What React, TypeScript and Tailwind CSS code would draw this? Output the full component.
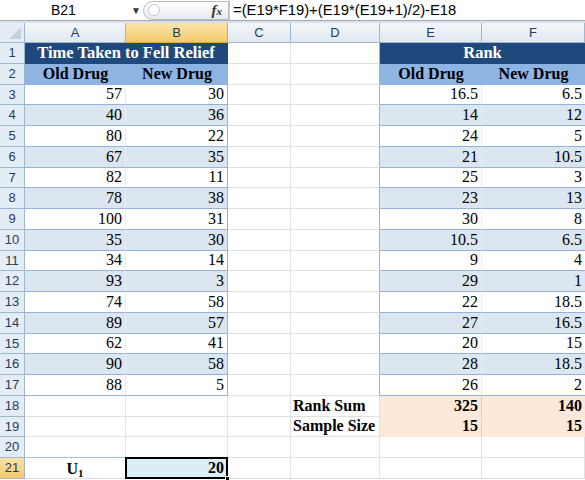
import type { ReactNode } from 'react'

const colA = [57, 40, 80, 67, 82, 78, 100, 35, 34, 93, 74, 89, 62, 90, 88]
const colB = [30, 36, 22, 35, 11, 38, 31, 30, 14, 3, 58, 57, 41, 58, 5]
const colE = ['16.5', '14', '24', '21', '25', '23', '30', '10.5', '9', '29', '22', '27', '20', '28', '26']
const colF = ['6.5', '12', '5', '10.5', '3', '13', '8', '6.5', '4', '1', '18.5', '16.5', '15', '18.5', '2']

const serif = "font-['Liberation_Serif','Times_New_Roman',serif] text-[16px] text-black"

const RowHead = ({ n, active }: { n: number; active?: boolean }) => (
  <div
    className={`flex items-center justify-center border-r border-b border-[#9eb6ce] font-['Liberation_Sans',Arial,sans-serif] text-[13px] text-[#263c57] ${
      active ? 'bg-gradient-to-b from-[#fbe3a7] to-[#f3c86a]' : 'bg-[#e4ecf6]'
    }`}
  >
    {n}
  </div>
)

const Blank = ({ cls = '' }: { cls?: string }) => (
  <div className={`border-r border-b border-[#dfe1e2] bg-white ${cls}`} />
)

const Num = ({ children, cls, bold }: { children: ReactNode; cls: string; bold?: boolean }) => (
  <div className={`flex items-end justify-end pr-[3px] pb-[1px] leading-none ${serif} ${bold ? 'font-bold' : ''} ${cls}`}>
    <span className="pb-[1px]">{children}</span>
  </div>
)

export default function App() {
  return (
    <div className="h-[480px] w-[585px] overflow-hidden bg-white">
      {/* formula bar */}
      <div className="flex h-[21px] items-center border-b border-[#a5acb5] bg-white font-['Liberation_Sans',Arial,sans-serif] text-[14px] text-black">
        <div className="flex w-[143px] items-center">
          <span className="ml-[51px] w-[80px]">B21</span>
          <span className="text-[10px] text-[#333]">▼</span>
        </div>
        <div className="flex h-[19px] w-[86px] items-center rounded-l-full border border-[#b6bcc6] bg-gradient-to-b from-white to-[#e6e9ee]">
          <span className="ml-[4px] h-[12px] w-[12px] rounded-full border border-[#c4c9d1] bg-white" />
          <span className="ml-auto mr-[6px] font-['Liberation_Serif',serif] text-[15px] italic font-bold text-[#333]">
            f<span className="text-[11px]">x</span>
          </span>
        </div>
        <div className="h-full border-l border-[#c9cdd3] pl-[3px] text-[14.8px] leading-[20px]">=(E19*F19)+(E19*(E19+1)/2)-E18</div>
      </div>
      <div className="h-[2px] bg-[#dbe1e8]" />

      <div className="grid grid-cols-[25px_101px_102px_63px_89px_102px_103px] grid-rows-[20px] auto-rows-[20.75px]">
        {/* column headers */}
        <div className="relative border-r border-b border-[#9eb6ce] bg-[#e4ecf6]">
          <div className="absolute right-[3px] bottom-[3px] h-0 w-0 border-t-[12px] border-l-[12px] border-t-transparent border-l-transparent border-b-0 border-r-[12px] border-r-[#c7d0da]" />
        </div>
        {['A', 'B', 'C', 'D', 'E', 'F'].map((c) => (
          <div
            key={c}
            className={`flex items-center justify-center border-r border-b font-['Liberation_Sans',Arial,sans-serif] text-[13px] text-[#263c57] ${
              c === 'B'
                ? 'border-[#e4a93a] bg-gradient-to-b from-[#fbe5ad] to-[#f4c968]'
                : 'border-[#9eb6ce] bg-gradient-to-b from-[#f3f6fa] to-[#e1e8f1]'
            }`}
          >
            {c}
          </div>
        ))}

        {/* row 1 */}
        <RowHead n={1} />
        <div className="col-span-2 flex items-center justify-center border-r border-b border-[#1f497d] bg-[#1f497d] font-['Liberation_Serif',serif] text-[16.5px] font-bold text-white">
          Time Taken to Fell Relief
        </div>
        <Blank />
        <Blank cls="border-r-[#95b3d7]" />
        <div className="col-span-2 flex items-center justify-center border-b border-[#1f497d] bg-[#1f497d] font-['Liberation_Serif',serif] text-[16.5px] font-bold text-white">
          Rank
        </div>

        {/* row 2 */}
        <RowHead n={2} />
        {['Old Drug', 'New Drug'].map((t) => (
          <div key={t} className={`flex items-center justify-center border-b border-[#8db4e2] bg-[#8db4e2] font-bold ${serif}`}>
            {t}
          </div>
        ))}
        <Blank />
        <Blank cls="border-r-[#95b3d7]" />
        {['Old Drug', 'New Drug'].map((t) => (
          <div key={'e' + t} className={`flex items-center justify-center border-b border-[#8db4e2] bg-[#8db4e2] font-bold ${serif}`}>
            {t}
          </div>
        ))}

        {/* data rows 3-17 */}
        {colA.map((a, i) => {
          const bg = i % 2 === 1 ? 'bg-[#dce6f1]' : 'bg-white'
          return [
            <RowHead key={'h' + i} n={i + 3} />,
            <Num key={'a' + i} cls={`${bg} border-r border-b border-r-[#e8edf3] border-b-[#95b3d7]`}>{a}</Num>,
            <Num key={'b' + i} cls={`${bg} border-r border-b border-[#95b3d7]`}>{colB[i]}</Num>,
            <Blank key={'c' + i} />,
            <Blank key={'d' + i} cls="border-r-[#95b3d7]" />,
            <Num key={'e' + i} cls={`${bg} border-r border-b border-r-[#e8edf3] border-b-[#95b3d7]`}>{colE[i]}</Num>,
            <Num key={'f' + i} cls={`${bg} border-b border-[#95b3d7]`}>{colF[i]}</Num>,
          ]
        })}

        {/* rows 18-19 */}
        {[
          ['Rank Sum', '325', '140'],
          ['Sample Size', '15', '15'],
        ].map(([label, e, f], i) => [
          <RowHead key={'h18' + i} n={18 + i} />,
          <Blank key={'a18' + i} />,
          <Blank key={'b18' + i} />,
          <Blank key={'c18' + i} />,
          <div key={'d18' + i} className={`flex items-end border-r border-b border-[#dfe1e2] pb-[2px] pl-[2px] leading-none font-bold ${serif}`}>
            {label}
          </div>,
          <Num key={'e18' + i} bold cls="bg-[#fde9d9] border-r border-r-[#c5d3e3] border-b border-b-[#fde9d9]">{e}</Num>,
          <Num key={'f18' + i} bold cls="bg-[#fde9d9] border-b border-b-[#fde9d9]">{f}</Num>,
        ])}

        {/* row 20 */}
        <RowHead n={20} />
        <Blank cls="border-b-[#a9c0dc]" />
        <Blank cls="border-b-[#a9c0dc]" />
        <Blank />
        <Blank />
        <Blank />
        <Blank />

        {/* row 21 */}
        <RowHead n={21} active />
        <div className={`flex items-end justify-center border-r border-b border-[#dfe1e2] pb-[1px] leading-none font-bold ${serif}`}>
          <span>
            U<sub className="text-[11px]">1</sub>
          </span>
        </div>
        <div className={`relative -mt-px -ml-px flex items-end justify-end border-2 border-black bg-[#daeef3] pr-[2px] pb-[1px] leading-none font-bold ${serif}`}>
          20
          <span className="absolute -right-[4px] -bottom-[4px] h-[5px] w-[5px] border border-white bg-black" />
        </div>
        <Blank />
        <Blank />
        <Blank />
        <Blank />
      </div>
    </div>
  )
}
